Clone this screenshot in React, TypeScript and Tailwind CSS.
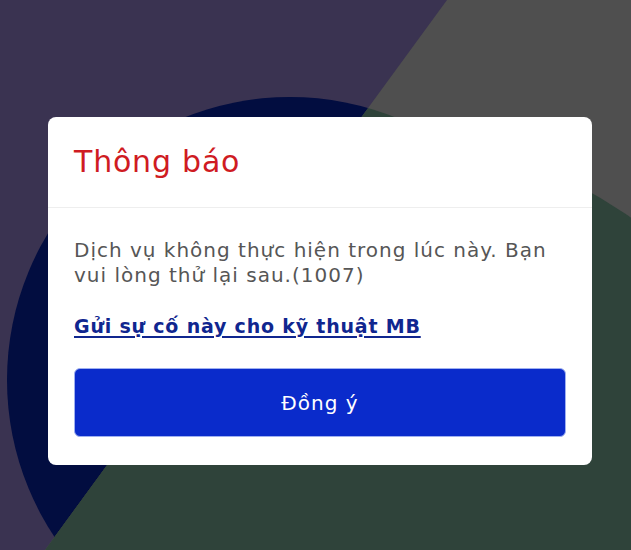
import React from "react";

function Backdrop() {
  return (
    <svg
      className="absolute inset-0 h-full w-full"
      viewBox="0 0 631 550"
      preserveAspectRatio="none"
      aria-hidden="true"
    >
      <defs>
        <clipPath id="leftSide">
          <polygon points="0,0 447,0 45,550 0,550" />
        </clipPath>
        <clipPath id="rightSide">
          <polygon points="447,0 631,0 631,550 45,550" />
        </clipPath>
      </defs>
      <rect x="0" y="0" width="631" height="550" fill="#3a3351" />
      <polygon points="447,0 631,0 631,550 45,550" fill="#4f4f4f" />
      <circle cx="290" cy="380" r="283" fill="#020d40" clipPath="url(#leftSide)" />
      <g clipPath="url(#rightSide)" fill="#2f433a">
        <circle cx="290" cy="380" r="283" />
        <circle cx="300" cy="700" r="585" />
      </g>
    </svg>
  );
}

export default function App() {
  return (
    <div
      className="relative h-[550px] w-[631px] overflow-hidden"
      style={{ fontFamily: '"DejaVu Sans", "Noto Sans", sans-serif' }}
    >
      <Backdrop />
      <div className="relative pl-[48px] pt-[117px]">
        <div className="w-[544px] rounded-[8px] bg-white">
          <div className="flex h-[90px] items-center px-[26px]">
            <h2 className="text-[30px] leading-none tracking-[0.8px] text-[#cf1b22]">Thông báo</h2>
          </div>
          <div className="h-px bg-[#eeeeee]" />
          <div className="flex flex-col px-[26px] pt-[30px] pb-[28px]">
            <p className="text-[20px] leading-[25px] tracking-[1px] text-[#565656]">
              Dịch vụ không thực hiện trong lúc này. Bạn vui lòng thử lại sau.(1007)
            </p>
            <a
              href="#"
              className="mt-[26px] self-start text-[19px] leading-[24px] font-bold tracking-[0.8px] text-[#10268f] underline decoration-2 underline-offset-[3px]"
            >
              Gửi sự cố này cho kỹ thuật MB
            </a>
            <button
              type="button"
              className="mt-[30px] flex h-[69px] items-center justify-center rounded-[6px] border border-[#9fb0f0] bg-[#0a2bcb] text-[20px] tracking-[1px] text-white"
            >
              Đồng ý
            </button>
          </div>
        </div>
      </div>
    </div>
  );
}
